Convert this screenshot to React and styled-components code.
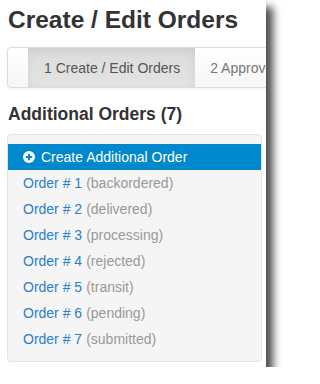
import React from "react";
import styled, { createGlobalStyle } from "styled-components";

const GlobalStyle = createGlobalStyle`
  html, body {
    margin: 0;
    padding: 0;
    background: #fff;
  }
  body {
    font-family: "Liberation Sans", Arial, sans-serif;
  }
`;

const Frame = styled.div`
  width: 266px;
  height: 367px;
  background: #fff;
  overflow: hidden;
  box-shadow: 7px 7px 8px 0 rgba(0, 0, 0, 0.7);
  padding-left: 7px;
  box-sizing: border-box;
`;

const Title = styled.h1`
  margin: 0 0 14px 0;
  padding-top: 6px;
  font-size: 24.5px;
  line-height: 27px;
  font-weight: bold;
  color: #333;
  white-space: nowrap;
  padding-left: 1px;
`;

const Navbar = styled.div`
  display: flex;
  width: 400px;
  height: 39px;
  border: 1px solid #dcdcdc;
  border-radius: 4px;
  background: linear-gradient(to bottom, #ffffff 0%, #f6f6f6 100%);
  box-shadow: 0 1px 4px rgba(0, 0, 0, 0.06);
  padding-left: 20px;
  box-sizing: content-box;
`;

const Tab = styled.div`
  display: flex;
  align-items: center;
  padding: 0 15px 0 ${(p) => (p.$active ? "16px" : "15px")};
  font-size: 14px;
  white-space: nowrap;
  color: ${(p) => (p.$active ? "#555" : "#777")};
  background: ${(p) =>
    p.$active ? "linear-gradient(to bottom, #dcdcdc 0%, #e3e3e3 100%)" : "transparent"};
  box-shadow: ${(p) => (p.$active ? "inset 0 3px 9px rgba(0, 0, 0, 0.075)" : "none")};
`;

const Heading = styled.h4`
  margin: 16px 0 10px 0;
  padding-left: 1px;
  font-size: 17.5px;
  line-height: 20px;
  font-weight: bold;
  color: #333;
`;

const Well = styled.div`
  width: 255px;
  box-sizing: border-box;
  background: #f5f5f5;
  border: 1px solid #e3e3e3;
  border-radius: 4px;
  padding: 9px 0;
`;

const Item = styled.div`
  display: flex;
  align-items: center;
  height: 26px;
  padding-left: 15px;
  font-size: 14px;
  white-space: nowrap;
  background: ${(p) => (p.$active ? "#0088cc" : "transparent")};
  color: ${(p) => (p.$active ? "#fff" : "#2a7fc9")};
`;

const Status = styled.span`
  color: #999;
  margin-left: 4px;
`;

const PlusIcon = styled.svg`
  width: 12px;
  height: 12px;
  margin-right: 6px;
  flex: none;
`;

const orders = [
  "backordered",
  "delivered",
  "processing",
  "rejected",
  "transit",
  "pending",
  "submitted",
];

export default function App() {
  return (
    <>
      <GlobalStyle />
      <Frame>
        <Title>Create / Edit Orders</Title>
        <Navbar>
          <Tab $active>1 Create / Edit Orders</Tab>
          <Tab>2 Approve Orders</Tab>
        </Navbar>
        <Heading>Additional Orders ({orders.length})</Heading>
        <Well>
          <Item $active>
            <PlusIcon viewBox="0 0 12 12">
              <circle cx="6" cy="6" r="6" fill="#fff" />
              <rect x="2.8" y="5" width="6.4" height="2" fill="#0088cc" />
              <rect x="5" y="2.8" width="2" height="6.4" fill="#0088cc" />
            </PlusIcon>
            Create Additional Order
          </Item>
          {orders.map((s, i) => (
            <Item key={s}>
              Order # {i + 1}
              <Status>({s})</Status>
            </Item>
          ))}
        </Well>
      </Frame>
    </>
  );
}
